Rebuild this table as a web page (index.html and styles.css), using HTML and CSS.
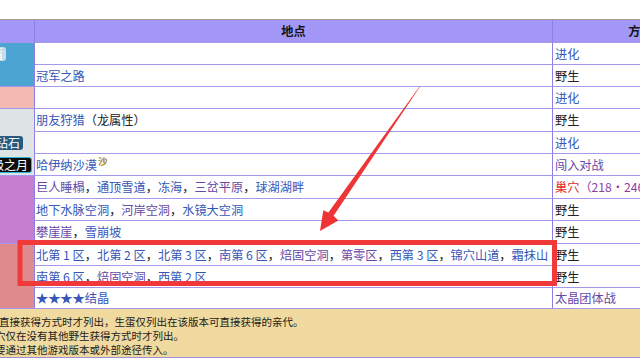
FILE: index.html
```html
<!DOCTYPE html>
<html lang="zh-CN">
<head>
<meta charset="utf-8">
<title>地点</title>
<link rel="stylesheet" href="styles.css">
</head>
<body>
<div class="page">
  <div class="tbl">
    <div class="c l hd"></div>
    <div class="c m hd"><span>地点</span></div>
    <div class="c r hd"><span>方式</span></div>

    <div class="c l blue"><span class="badge b1">盾</span></div>
    <div class="c m"></div>
    <div class="c r"><span><a>进化</a></span></div>

    <div class="c l blue end"></div>
    <div class="c m"><span><a>冠军之路</a></span></div>
    <div class="c r"><span>野生</span></div>

    <div class="c l pink end"></div>
    <div class="c m"></div>
    <div class="c r"><span><a>进化</a></span></div>

    <div class="c l grey"></div>
    <div class="c m"><span><a>朋友狩猎</a>（龙属性）</span></div>
    <div class="c r"><span>野生</span></div>

    <div class="c l grey"><span class="badge b5">晶灿钻石</span></div>
    <div class="c m"></div>
    <div class="c r"><span><a>进化</a></span></div>

    <div class="c l grey end"><span class="badge b6">究极之月</span></div>
    <div class="c m"><span><a>哈伊纳沙漠</a><sup class="sand">沙</sup></span></div>
    <div class="c r"><span><a class="v">闯入对战</a></span></div>

    <div class="c l purple"></div>
    <div class="c m"><span><a class="v">巨人睡榻</a>，<a>通顶雪道</a>，<a>冻海</a>，<a class="v">三岔平原</a>，<a>球湖湖畔</a></span></div>
    <div class="c r"><span><span class="den">巢穴</span><span class="den-ids">（218·246·259）</span></span></div>

    <div class="c l purple"></div>
    <div class="c m"><span><a>地下水脉空洞</a>，<a class="v">河岸空洞</a>，<a>水镜大空洞</a></span></div>
    <div class="c r"><span>野生</span></div>

    <div class="c l purple end"></div>
    <div class="c m"><span><a class="v">攀崖崖</a>，<a>雪崩坡</a></span></div>
    <div class="c r"><span>野生</span></div>

    <div class="c l salmon"></div>
    <div class="c m"><span><a>北第 1 区</a>，<a>北第 2 区</a>，<a>北第 3 区</a>，<a>南第 6 区</a>，<a class="v">焙固空洞</a>，<a class="v">第零区</a>，<a>西第 3 区</a>，<a>锦穴山道</a>，<a>霜抹山</a></span></div>
    <div class="c r"><span>野生</span></div>

    <div class="c l salmon"></div>
    <div class="c m"><span><a>南第 6 区</a>，<a class="v">焙固空洞</a>，<a>西第 2 区</a></span></div>
    <div class="c r"><span>野生</span></div>

    <div class="c l salmon end"></div>
    <div class="c m"><span><a>★★★★结晶</a></span></div>
    <div class="c r"><span><a class="v">太晶团体战</a></span></div>
  </div>
  <div class="foot">
    <div class="fl1">直接获得方式时才列出，生蛋仅列出在该版本可直接获得的亲代。</div>
    <div>穴仅在没有其他野生获得方式时才列出。</div>
    <div>要通过其他游戏版本或外部途径传入。</div>
  </div>
</div>
<svg class="marks" width="640" height="360" viewBox="0 0 640 360">
  <rect x="20" y="242.5" width="534.5" height="41" fill="none" stroke="#f1393a" stroke-width="5"/>
  <polygon points="420.6,85.8 333.6,215.8 338.3,220.6 320,231 323.3,210.2 328.4,212.4 419.6,86.6" fill="#ef3436"/>
</svg>
</body>
</html>
```

FILE: styles.css
```css
html, body {
  margin: 0;
  padding: 0;
  background: #ffffff;
}

body {
  width: 640px;
  height: 360px;
  overflow: hidden;
  position: relative;
  font-family: "Noto Sans CJK SC", "Noto Sans", sans-serif;
  font-size: 12.2px;
  color: #202122;
}

.page {
  padding-top: 19px;
}

.tbl {
  display: grid;
  grid-template-columns: 81px 518px 175px;
  grid-template-rows: 23px 22px 22px 22px 23px 22px 22px 23px 22px 23px 22px 22px 21px;
  width: 774px;
  margin-left: -46px;
  border-top: 1px solid #a89b8c;
}

.c {
  box-sizing: border-box;
  display: flex;
  align-items: center;
  white-space: nowrap;
  overflow: hidden;
  border-bottom: 1px solid #a498ea;
  border-right: 1px solid #8e80e2;
}

.l {
  grid-column: 1;
  justify-content: flex-end;
}

.m {
  grid-column: 2;
  padding-left: 1px;
  background: #ffffff;
}

.r {
  grid-column: 3;
  padding-left: 2px;
  border-right: none;
  background: #ffffff;
}

.hd {
  background: #a296f7;
  font-weight: bold;
  color: #141414;
  justify-content: center;
  padding-left: 0;
}

.blue { background: #4ca4d3; border-bottom-color: #4ca4d3; }
.pink { background: #f4b9b1; border-bottom-color: #f4b9b1; }
.grey { background: #dee3e6; border-bottom-color: #dee3e6; }
.purple { background: #c47fd1; border-bottom-color: #c47fd1; }
.salmon { background: #df8a8c; border-bottom-color: #df8a8c; }
.end { border-bottom-color: #a498ea; }

.badge {
  display: inline-block;
  flex: none;
  font-size: 12px;
  line-height: 14px;
  padding: 0 3px;
  border-radius: 3px;
  color: #ffffff;
}

.b1 {
  background: #c8dbe9;
  margin-right: 28px;
}

.b5 {
  background: #275a80;
  margin-right: 11px;
}

.b6 {
  background: #0c0c0c;
  border: 1px solid #2bb6d6;
  margin-right: 2px;
}

a {
  color: #3656b8;
  text-decoration: none;
}

a.v {
  color: #6548a6;
}

.sand {
  font-size: 9.5px;
  font-weight: bold;
  line-height: 0;
  color: #a98416;
  vertical-align: 5px;
  margin-left: 1px;
}

.den {
  color: #e52528;
}

.den-ids {
  color: #8c3ea6;
}

.foot {
  box-sizing: border-box;
  width: 774px;
  height: 49px;
  margin-left: -46px;
  padding: 6px 0 0 41px;
  background: #f0da9f;
  border-bottom: 1px solid #9d8fd8;
  font-size: 10.5px;
  line-height: 14px;
  color: #1b1b1b;
  white-space: nowrap;
}

.fl1 {
  padding-left: 4px;
}

.marks {
  position: absolute;
  left: 0;
  top: 0;
  pointer-events: none;
}
```
